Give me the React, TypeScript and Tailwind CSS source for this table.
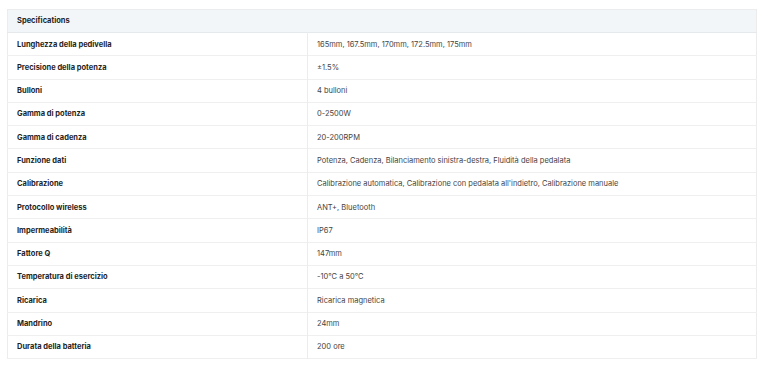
import React from 'react';

const SPECS: [string, string][] = [
  ['Lunghezza della pedivella', '165mm, 167.5mm, 170mm, 172.5mm, 175mm'],
  ['Precisione della potenza', '±1.5%'],
  ['Bulloni', '4 bulloni'],
  ['Gamma di potenza', '0-2500W'],
  ['Gamma di cadenza', '20-200RPM'],
  ['Funzione dati', 'Potenza, Cadenza, Bilanciamento sinistra-destra, Fluidità della pedalata'],
  ['Calibrazione', "Calibrazione automatica, Calibrazione con pedalata all'indietro, Calibrazione manuale"],
  ['Protocollo wireless', 'ANT+, Bluetooth'],
  ['Impermeabilità', 'IP67'],
  ['Fattore Q', '147mm'],
  ['Temperatura di esercizio', '-10°C a 50°C'],
  ['Ricarica', 'Ricarica magnetica'],
  ['Mandrino', '24mm'],
  ['Durata della batteria', '200 ore'],
];

const App: React.FC = () => {
  return (
    <div className="w-[770px] h-[376px] bg-white pt-[9px] pl-[7px]" style={{ fontFamily: 'Inter, "Noto Sans", sans-serif' }}>
      <table className="w-[750px] border-collapse border border-[#ececec] text-[7.5px] text-[#1f1f1f]">
        <thead>
          <tr className="h-[23px] bg-[#f3f6f9] border-b border-[#e6e9ec]">
            <th colSpan={2} className="text-left font-bold px-[9px]">Specifications</th>
          </tr>
        </thead>
        <tbody>
          {SPECS.map(([label, value]) => (
            <tr key={label} className="h-[23.3px] border-b border-[#efefef]">
              <td className="w-[300px] px-[9px] font-bold border-r border-[#ececec]">{label}</td>
              <td className="px-[9px] text-[#444]">{value}</td>
            </tr>
          ))}
        </tbody>
      </table>
    </div>
  );
};

export default App;
